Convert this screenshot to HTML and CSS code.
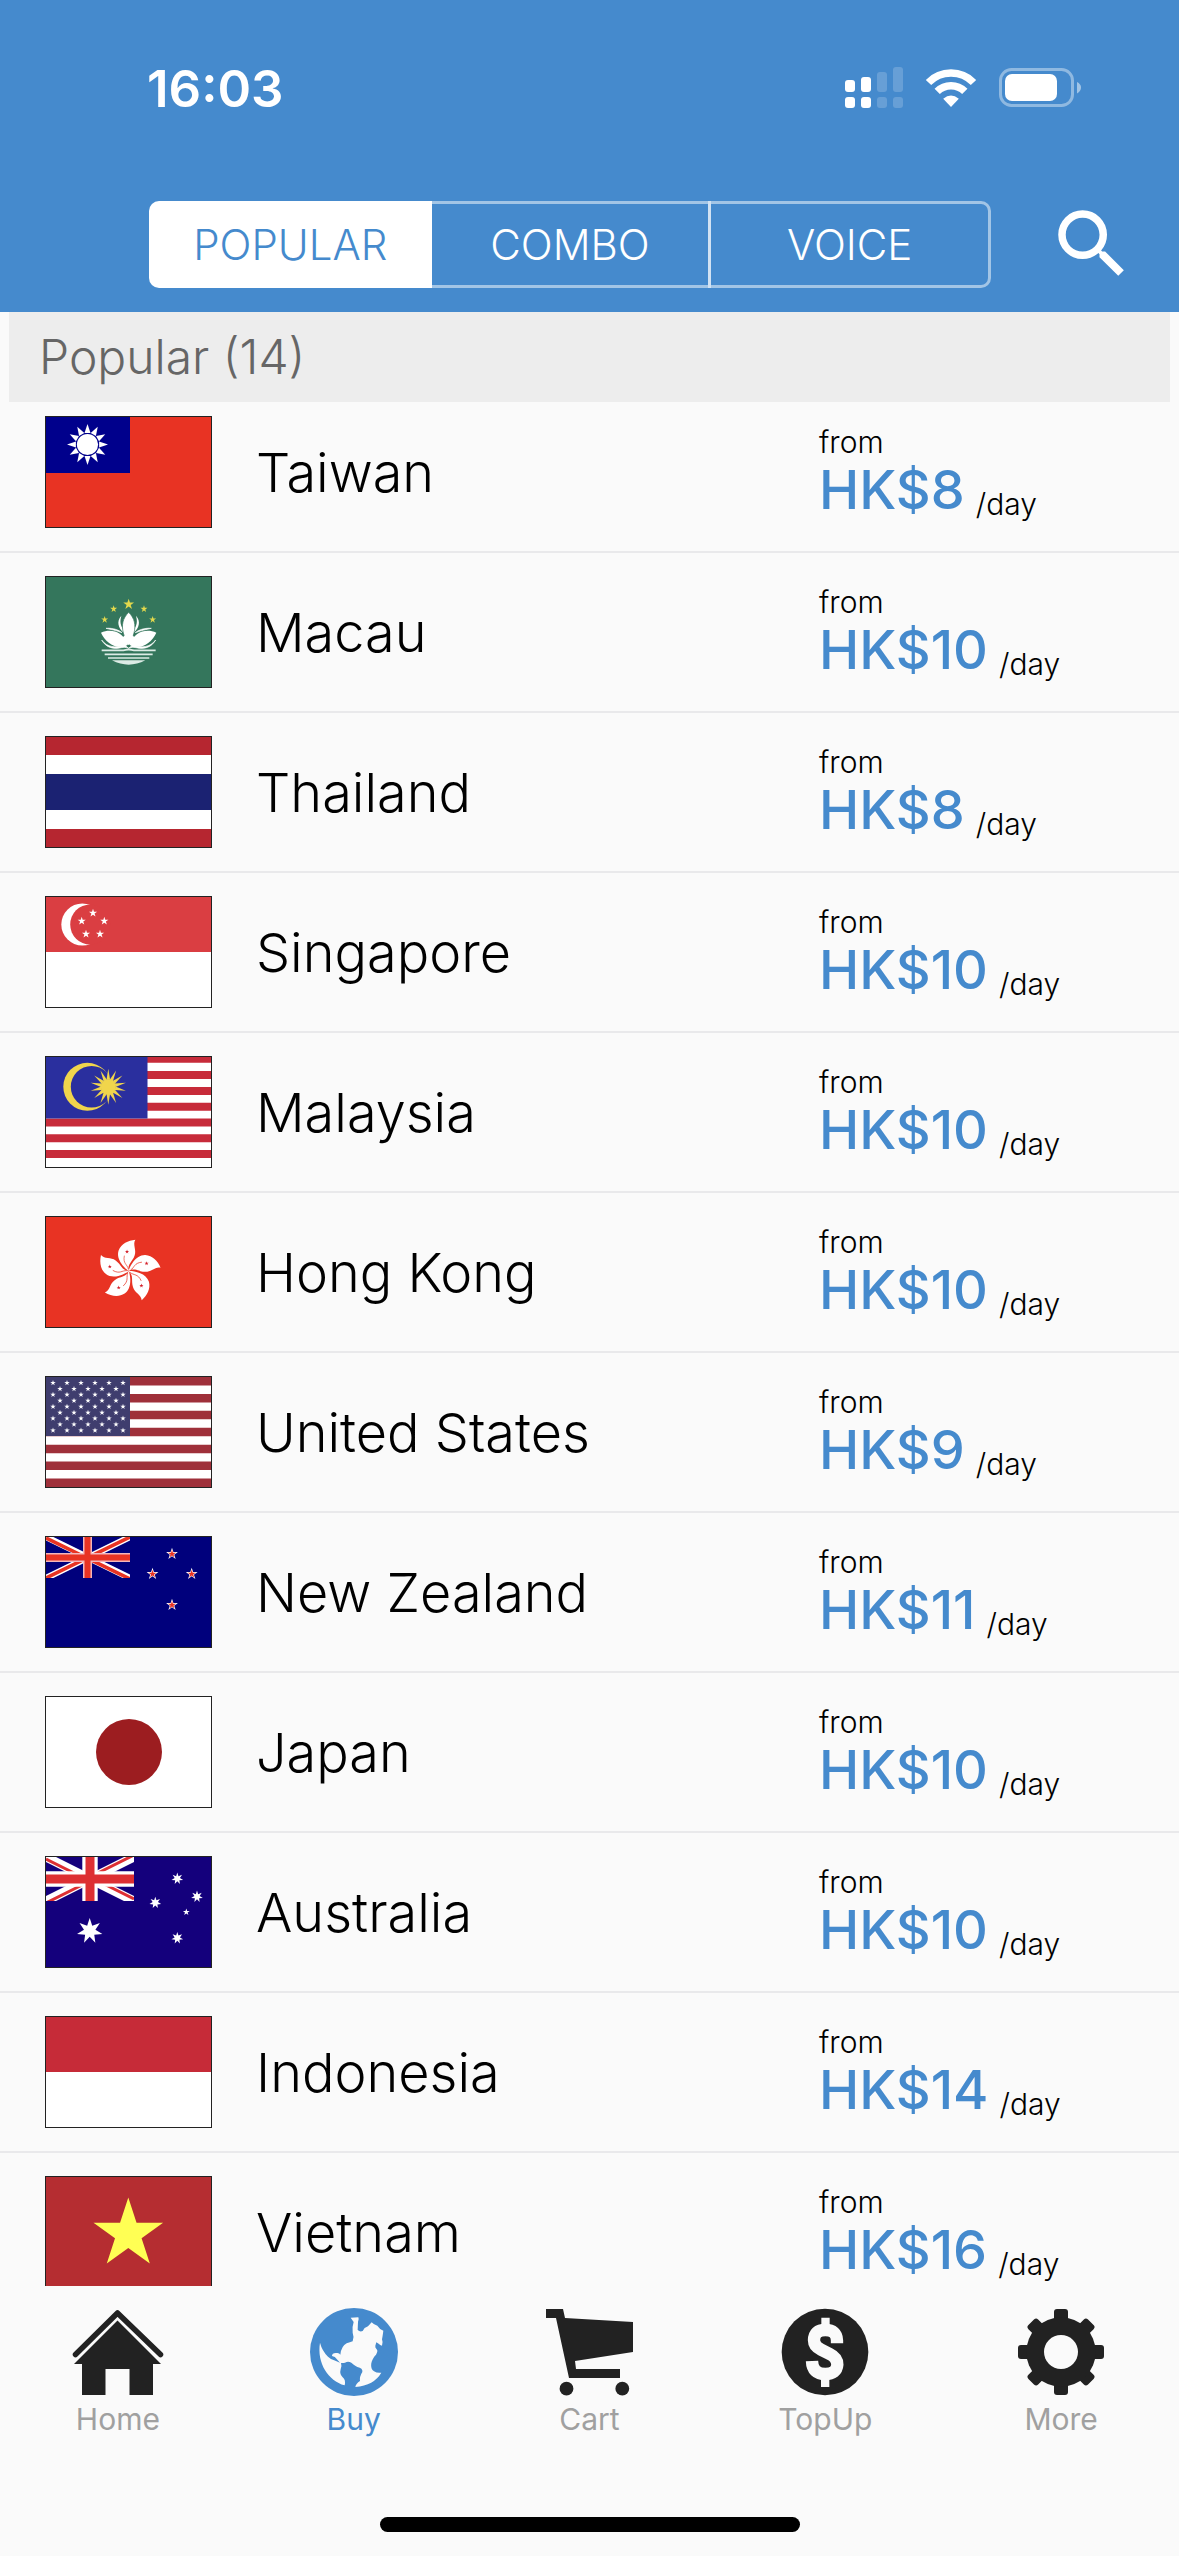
FILE: index.html
```html
<!DOCTYPE html>
<html lang="en">
<head>
<meta charset="utf-8">
<meta name="viewport" content="width=device-width">
<title>Popular plans</title>
<link rel="stylesheet" href="styles.css">
</head>
<body>
<svg class="defs" aria-hidden="true">
  <defs>
    <path id="star5" d="M0-10L2.25-3.09L9.51-3.09L3.63 1.18L5.88 8.09L0 3.82L-5.88 8.09L-3.63 1.18L-9.51-3.09L-2.25-3.09Z"/>
    <path id="star7" d="M0-10L1.95-4.05L7.82-6.23L4.39-1L9.75 2.23L3.52 2.81L4.34 9.01L0 4.5L-4.34 9.01L-3.52 2.81L-9.75 2.23L-4.39-1L-7.82-6.23L-1.95-4.05Z"/>
    <path id="ray12" d="M0-20.5L3-11.6H-3Z"/>
    <path id="ray14" d="M0-18L1.8-7H-1.8Z"/>
    <g id="us-star"><use href="#star5" transform="scale(.29)"/></g>
    <g id="us-row5">
      <use href="#us-star" x="14"/><use href="#us-star" x="28"/><use href="#us-star" x="42"/><use href="#us-star" x="56"/><use href="#us-star" x="70"/>
    </g>
    <g id="us-row6">
      <use href="#us-star" x="7"/><use href="#us-star" x="21"/><use href="#us-star" x="35"/><use href="#us-star" x="49"/><use href="#us-star" x="63"/><use href="#us-star" x="77"/>
    </g>
    <g id="nz-star"><use href="#star5" transform="scale(.62)" fill="#fff"/><use href="#star5" transform="scale(.42)" fill="#e83323"/></g>
    <g id="petal">
      <path fill="#fff" d="M0 0C-10-6-40-34-30-62C-22-82-2-92 20-94C11-80 24-64 18-47C11-26-4-22 0 0Z"/>
      <path fill="none" stroke="#e83323" stroke-width="2" d="M-1-6C-4-20-18-22-13-46"/>
      <use href="#star5" transform="translate(-5 -58) scale(.65)" fill="#d3202a"/>
    </g>
    <g id="lotus-side" fill="#fff">
      <path d="M51 131C82 118 116 128 132 167C104 184 66 166 51 131Z"/>
      <path d="M112 80C96 98 104 116 117 130L120 124C109 110 107 98 112 80Z"/>
      <path d="M66 118C88 116 106 124 114 131L110 130C96 124 82 122 66 118Z" stroke="#fff" stroke-width="2"/>
      <path d="M53 153C70 176 96 176 116 170Q126 168 134 178Q122 173 112 176C88 182 66 176 53 153Z" stroke="#fff" stroke-width="2"/>
    </g>
  </defs>
</svg>

<header class="header">
  <div class="status">
    <time class="clock">16:03</time>
    <div class="indicators">
      <svg width="58" height="42" viewBox="0 0 58 42" fill="#fff" role="img" aria-label="Signal">
        <rect x="0" y="13" width="10" height="12" rx="3"/><rect x="16" y="10" width="10" height="15" rx="3"/>
        <rect x="0" y="30" width="10" height="11" rx="3"/><rect x="16" y="30" width="10" height="11" rx="3"/>
        <g opacity=".18"><rect x="32" y="5" width="10" height="20" rx="3"/><rect x="48" y="0" width="10" height="25" rx="3"/>
        <rect x="32" y="30" width="10" height="11" rx="3"/><rect x="48" y="30" width="10" height="11" rx="3"/></g>
      </svg>
      <svg width="52" height="38" viewBox="0 0 52 38" role="img" aria-label="Wi-Fi">
        <g fill="none" stroke="#fff" stroke-width="7.5">
          <path d="M3.5 13.5A31.5 31.5 0 0 1 48.5 13.5"/><path d="M12.2 22.4A19.5 19.5 0 0 1 39.8 22.4"/>
        </g>
        <path fill="#fff" d="M26 38L18.2 29.8Q26 23 33.8 29.8Z"/>
      </svg>
      <svg width="82" height="40" viewBox="0 0 82 40" role="img" aria-label="Battery">
        <rect x="1.5" y="1.5" width="72" height="36" rx="11" fill="none" stroke="#fff" stroke-opacity=".4" stroke-width="3"/>
        <rect x="6" y="6" width="52" height="27" rx="7" fill="#fff"/>
        <path d="M78 14Q82 16 82 19.5T78 25.500Z" fill="#fff" opacity=".5"/>
      </svg>
    </div>
  </div>
  <div class="toolbar">
    <div class="segments" role="tablist">
      <button class="segment selected" role="tab" aria-selected="true">POPULAR</button>
      <button class="segment" role="tab" aria-selected="false">COMBO</button>
      <button class="segment" role="tab" aria-selected="false">VOICE</button>
    </div>
    <button class="search" aria-label="Search">
      <svg width="90" height="90" viewBox="0 0 24 24" fill="#fff"><path d="M15.5 14h-.79l-.28-.27A6.471 6.471 0 0 0 16 9.500 6.500 6.500 0 1 0 9.500 16c1.610 0 3.090-.59 4.230-1.570l.27.28v.79l5 4.990L20.490 19l-4.990-5zm-6 0C7.010 14 5 11.990 5 9.500S7.010 5 9.500 5 14 7.010 14 9.500 11.990 14 9.500 14z"/></svg>
    </button>
  </div>
</header>

<main class="content">
  <h1 class="section">Popular (14)</h1>
  <ul class="list">
    <li><a class="row" href="#taiwan">
      <svg class="flag" viewBox="0 0 165 110"><path fill="#e83323" d="M0 0h165v110H0z"/><path fill="#00008c" d="M0 0h84v56H0z"/>
        <g transform="translate(41.5 27.5)" fill="#fff"><use href="#ray12"/><use href="#ray12" transform="rotate(30)"/><use href="#ray12" transform="rotate(60)"/><use href="#ray12" transform="rotate(90)"/><use href="#ray12" transform="rotate(120)"/><use href="#ray12" transform="rotate(150)"/><use href="#ray12" transform="rotate(180)"/><use href="#ray12" transform="rotate(210)"/><use href="#ray12" transform="rotate(240)"/><use href="#ray12" transform="rotate(270)"/><use href="#ray12" transform="rotate(300)"/><use href="#ray12" transform="rotate(330)"/><circle r="10.600"/></g></svg>
      <span class="name">Taiwan</span>
      <span class="price"><span class="from">from</span><span class="line"><b class="amount">HK$8</b><span class="unit">/day</span></span></span>
    </a></li>
    <li><a class="row" href="#macau">
      <svg class="flag" viewBox="0 0 165 110"><path fill="#34765c" d="M0 0h165v110H0z"/>
        <g transform="translate(38 12) scale(.3333)">
          <g fill="#e4d94c"><use href="#star5" transform="translate(134 46) scale(1.7)"/><use href="#star5" transform="translate(89 60) scale(1.1)"/><use href="#star5" transform="translate(180 60) scale(1.1)"/><use href="#star5" transform="translate(62 92) scale(1.1)"/><use href="#star5" transform="translate(206 92) scale(1.1)"/></g>
          <use href="#lotus-side"/><use href="#lotus-side" transform="translate(268 0) scale(-1 1)"/>
          <path fill="#fff" stroke="#34765c" stroke-width="2" d="M134 70C116 88 112 108 118 132Q124 155 134 168Q144 155 150 132C156 108 152 88 134 70Z"/>
          <path fill="#fff" d="M110 150L134 168L158 150L134 130Z"/>
          <g fill="none" stroke="#dcebe5" stroke-width="5"><path d="M53 184H118Q134 180 150 184H215M62 196H206M72 207H196"/></g>
          <path fill="#dcebe5" d="M84 214H184Q134 240 84 214Z"/>
        </g></svg>
      <span class="name">Macau</span>
      <span class="price"><span class="from">from</span><span class="line"><b class="amount">HK$10</b><span class="unit">/day</span></span></span>
    </a></li>
    <li><a class="row" href="#thailand">
      <svg class="flag" viewBox="0 0 165 110"><path fill="#b62630" d="M0 0h165v110H0z"/><path fill="#fff" d="M0 18h165v74H0z"/><path fill="#1b2272" d="M0 37h165v36H0z"/></svg>
      <span class="name">Thailand</span>
      <span class="price"><span class="from">from</span><span class="line"><b class="amount">HK$8</b><span class="unit">/day</span></span></span>
    </a></li>
    <li><a class="row" href="#singapore">
      <svg class="flag" viewBox="0 0 165 110"><path fill="#fff" d="M0 0h165v110H0z"/><path fill="#da3e42" d="M0 0h165v55H0z"/><circle cx="36.300" cy="27.500" r="21" fill="#fff"/><circle cx="44.200" cy="27.500" r="20" fill="#da3e42"/>
        <g fill="#fff"><use href="#star5" transform="translate(47 16) scale(.43)"/><use href="#star5" transform="translate(35.700 24) scale(.43)"/><use href="#star5" transform="translate(58.300 24) scale(.43)"/><use href="#star5" transform="translate(40 37) scale(.43)"/><use href="#star5" transform="translate(54 37) scale(.43)"/></g></svg>
      <span class="name">Singapore</span>
      <span class="price"><span class="from">from</span><span class="line"><b class="amount">HK$10</b><span class="unit">/day</span></span></span>
    </a></li>
    <li><a class="row" href="#malaysia">
      <svg class="flag" viewBox="0 0 165 110"><path fill="#fff" d="M0 0h165v110H0z"/><path fill="#c72b3a" d="M0 0h165v5.700H0zM0 14h165v8H0zM0 30h165v8H0zM0 45.700h165v8H0zM0 61.500h165v8H0zM0 77.300h165v8H0zM0 93h165v8H0z"/><path fill="#2a2f9e" d="M0 0h101.500v61.500H0z"/>
        <circle cx="41.300" cy="29.800" r="24" fill="#f0d54c"/><circle cx="45.600" cy="29.800" r="20.800" fill="#2a2f9e"/>
        <g transform="translate(62.300 29.800)" fill="#f0d54c"><circle r="7.600"/><use href="#ray14"/><use href="#ray14" transform="rotate(25.700)"/><use href="#ray14" transform="rotate(51.400)"/><use href="#ray14" transform="rotate(77.100)"/><use href="#ray14" transform="rotate(102.900)"/><use href="#ray14" transform="rotate(128.600)"/><use href="#ray14" transform="rotate(154.300)"/><use href="#ray14" transform="rotate(180)"/><use href="#ray14" transform="rotate(205.700)"/><use href="#ray14" transform="rotate(231.400)"/><use href="#ray14" transform="rotate(257.100)"/><use href="#ray14" transform="rotate(282.900)"/><use href="#ray14" transform="rotate(308.600)"/><use href="#ray14" transform="rotate(334.300)"/></g></svg>
      <span class="name">Malaysia</span>
      <span class="price"><span class="from">from</span><span class="line"><b class="amount">HK$10</b><span class="unit">/day</span></span></span>
    </a></li>
    <li><a class="row" href="#hong-kong">
      <svg class="flag" viewBox="0 0 165 110"><path fill="#e83323" d="M0 0h165v110H0z"/>
        <g transform="translate(82.700 54) scale(.3333)"><use href="#petal"/><use href="#petal" transform="rotate(72)"/><use href="#petal" transform="rotate(144)"/><use href="#petal" transform="rotate(216)"/><use href="#petal" transform="rotate(288)"/></g></svg>
      <span class="name">Hong Kong</span>
      <span class="price"><span class="from">from</span><span class="line"><b class="amount">HK$10</b><span class="unit">/day</span></span></span>
    </a></li>
    <li><a class="row" href="#united-states">
      <svg class="flag" viewBox="0 0 165 110"><path fill="#fff" d="M0 0h165v110H0z"/><path stroke="#9f303a" stroke-width="8.460" d="M0 4.230h165M0 21.150h165M0 38.080h165M0 55h165M0 71.920h165M0 88.850h165M0 105.770h165"/><path fill="#3f3d6e" d="M0 0h84v59H0z"/>
        <g fill="#fff"><use href="#us-row6" y="5.800"/><use href="#us-row5" y="11.800"/><use href="#us-row6" y="17.700"/><use href="#us-row5" y="23.700"/><use href="#us-row6" y="29.600"/><use href="#us-row5" y="35.600"/><use href="#us-row6" y="41.500"/><use href="#us-row5" y="47.400"/><use href="#us-row6" y="53.400"/></g></svg>
      <span class="name">United States</span>
      <span class="price"><span class="from">from</span><span class="line"><b class="amount">HK$9</b><span class="unit">/day</span></span></span>
    </a></li>
    <li><a class="row" href="#new-zealand">
      <svg class="flag" viewBox="0 0 165 110"><path fill="#00007c" d="M0 0h165v110H0z"/>
        <svg width="84" height="41" viewBox="0 0 84 41">
          <path stroke="#fff" stroke-width="6.500" d="M0 0L84 41M84 0L0 41"/><path stroke="#e83323" stroke-width="3.600" d="M0 1L84 42M84 0L0 41"/>
          <path stroke="#f3b6ba" stroke-width="9" d="M41.500 0V41M0 20.500H84"/><path stroke="#e83323" stroke-width="6" d="M41.500 0V41M0 20.500H84"/>
        </svg>
        <use href="#nz-star" x="126" y="17"/><use href="#nz-star" x="106.500" y="37"/><use href="#nz-star" x="145.700" y="37"/><use href="#nz-star" x="126" y="68"/></svg>
      <span class="name">New Zealand</span>
      <span class="price"><span class="from">from</span><span class="line"><b class="amount">HK$11</b><span class="unit">/day</span></span></span>
    </a></li>
    <li><a class="row" href="#japan">
      <svg class="flag" viewBox="0 0 165 110"><path fill="#fff" d="M0 0h165v110H0z"/><circle cx="83" cy="55" r="33" fill="#9c1d20"/></svg>
      <span class="name">Japan</span>
      <span class="price"><span class="from">from</span><span class="line"><b class="amount">HK$10</b><span class="unit">/day</span></span></span>
    </a></li>
    <li><a class="row" href="#australia">
      <svg class="flag" viewBox="0 0 165 110"><path fill="#14007c" d="M0 0h165v110H0z"/>
        <svg width="88" height="44" viewBox="0 0 88 44">
          <path stroke="#fff" stroke-width="9" d="M0 0L88 44M88 0L0 44"/>
          <path stroke="#dd2f33" stroke-width="3" d="M0 2L44 24M88 -2L44 20M44 20L88 42M44 24L0 46"/>
          <path stroke="#fff" stroke-width="15.400" d="M44 0V44M0 22H88"/><path stroke="#dd2f33" stroke-width="9" d="M44 0V44M0 22H88"/>
        </svg>
        <g fill="#fff"><use href="#star7" transform="translate(43.700 74) scale(1.300)"/><use href="#star7" transform="translate(131.300 21.600) scale(.6)"/><use href="#star7" transform="translate(151 39.600) scale(.6)"/><use href="#star7" transform="translate(109.300 45.700) scale(.6)"/><use href="#star5" transform="translate(140.300 55) scale(.36)"/><use href="#star7" transform="translate(131.300 81) scale(.6)"/></g></svg>
      <span class="name">Australia</span>
      <span class="price"><span class="from">from</span><span class="line"><b class="amount">HK$10</b><span class="unit">/day</span></span></span>
    </a></li>
    <li><a class="row" href="#indonesia">
      <svg class="flag" viewBox="0 0 165 110"><path fill="#fff" d="M0 0h165v110H0z"/><path fill="#c62b38" d="M0 0h165v55H0z"/></svg>
      <span class="name">Indonesia</span>
      <span class="price"><span class="from">from</span><span class="line"><b class="amount">HK$14</b><span class="unit">/day</span></span></span>
    </a></li>
    <li><a class="row" href="#vietnam">
      <svg class="flag" viewBox="0 0 165 110"><path fill="#b52d31" d="M0 0h165v110H0z"/><use href="#star5" transform="translate(82.300 57) scale(3.660)" fill="#ffff54"/></svg>
      <span class="name">Vietnam</span>
      <span class="price"><span class="from">from</span><span class="line"><b class="amount">HK$16</b><span class="unit">/day</span></span></span>
    </a></li>
  </ul>
</main>

<footer class="footer">
  <nav class="tabs">
    <a class="tab" href="#home">
      <svg width="92" height="88" viewBox="0 0 92 88"><path fill="none" stroke="#222" stroke-width="5.500" stroke-linecap="round" stroke-linejoin="round" d="M3.500 46.500L45.500 5L88.500 46.500"/><path fill="#222" d="M45.500 12.500L89 56H81V87H57.500V61H33.500V87H10V56H2Z"/></svg>
      <span>Home</span>
    </a>
    <a class="tab active" href="#buy" aria-current="page">
      <svg width="88" height="88" viewBox="30 24 264 264"><circle cx="162" cy="156" r="132" fill="#458acd"/>
        <path fill="#fafafa" d="M152 53L175 52Q178 58 174 66L173 90Q180 97 188 93Q192 83 204 79L215 67Q222 75 232 77Q240 89 250 92Q248 108 246 118Q250 128 246 137Q240 136 236 131L229 127L226 137Q224 142 231 149Q234 153 228 164C212 180 208 204 222 214Q232 220 244 218Q222 256 166 261Q168 250 180 243Q178 230 187 216Q189 204 172 201Q160 194 154 188Q144 183 135 188Q128 190 123 189Q126 196 122 208Q118 222 128 232Q138 240 134 256C85 242 50 190 60 128Q66 152 84 170Q94 180 106 182L120 188L110 177Q106 170 96 168Q96 158 110 159Q118 158 121 164Q124 138 140 130Q150 127 158 124Q163 110 158 98Q156 80 161 66Z"/></svg>
      <span>Buy</span>
    </a>
    <a class="tab" href="#cart">
      <svg width="88" height="88" viewBox="-1 0 88 88" fill="#222"><path d="M0 1H17L19 10L87 14V44L29 53L30 61H74V70H23L10 10H0Z"/><circle cx="20.500" cy="80.700" r="6.900"/><circle cx="76.300" cy="80.700" r="6.900"/></svg>
      <span>Cart</span>
    </a>
    <a class="tab" href="#topup">
      <svg width="88" height="88" viewBox="-54 25 264 264"><circle cx="78" cy="157" r="130" fill="#222"/><path fill="none" stroke="#fafafa" stroke-width="37" d="M114 131V122Q113 91 79 91Q45 91 45 122Q45 140 66 150L92 163Q115 174 115 195Q113 223 79 223Q40 223 39 184"/><path fill="#fafafa" d="M67 54H92V82H67zM66 234H91V262H66z"/></svg>
      <span>TopUp</span>
    </a>
    <a class="tab" href="#more">
      <svg width="88" height="88" viewBox="-132 -132 264 264" fill="#222"><g id="teeth"><rect x="-21" y="-129" width="42" height="258" rx="9"/><rect x="-129" y="-21" width="258" height="42" rx="9"/></g><use href="#teeth" transform="rotate(45) scale(.98)"/><circle r="104"/><circle r="51" fill="#fafafa"/></svg>
      <span>More</span>
    </a>
  </nav>
  <div class="home-bar"></div>
</footer>
</body>
</html>
```
FILE: styles.css
```css
:root {
  --blue: #458acd;
  --page: #fafafa;
}

* {
  box-sizing: border-box;
}

body {
  margin: 0;
  height: 100vh;
  display: flex;
  flex-direction: column;
  background: var(--page);
  color: #000;
  font-family: Inter, "Liberation Sans", sans-serif;
}

button {
  margin: 0;
  padding: 0;
  border: 0;
  background: none;
  font: inherit;
  color: inherit;
}

a {
  color: inherit;
  text-decoration: none;
}

svg {
  display: block;
  flex: none;
}

.defs {
  position: absolute;
  width: 0;
  height: 0;
}

/* Header */

.header {
  flex: none;
  background: var(--blue);
  color: #fff;
}

.status {
  display: flex;
  align-items: center;
  justify-content: space-between;
  height: 176px;
  padding: 0 98px 0 147px;
}

.clock {
  font-size: 51px;
  font-weight: 600;
}

.indicators {
  display: flex;
  align-items: center;
  gap: 22px;
}

.toolbar {
  display: flex;
  align-items: center;
  gap: 56px;
  height: 136px;
  padding: 0 42px 0 149px;
}

.segments {
  display: flex;
  flex: 1;
}

.segment {
  flex: 1;
  height: 87px;
  border: 3px solid rgba(255, 255, 255, 0.5);
  font-size: 42px;
  font-weight: 300;
}

.segment + .segment {
  margin-left: -3px;
}

.segment:first-child {
  border-radius: 10px 0 0 10px;
}

.segment:last-child {
  border-radius: 0 10px 10px 0;
}

.segment.selected {
  background: #fff;
  color: var(--blue);
}

/* Country list */

.content {
  flex: 1;
  min-height: 0;
  overflow-y: auto;
  scrollbar-width: none;
}

.section {
  position: sticky;
  top: 0;
  z-index: 1;
  margin: 0 9px;
  padding-left: 30px;
  background: #ededed;
  color: #666;
  font-size: 48px;
  font-weight: 300;
  line-height: 90px;
}

.list {
  margin: -9px 0 0;
  padding: 0;
  list-style: none;
}

.row {
  display: grid;
  grid-template-columns: 167px 1fr 360px;
  align-items: center;
  column-gap: 44px;
  height: 160px;
  padding-left: 45px;
  border-bottom: 2px solid #e9e9eb;
}

.flag {
  width: 167px;
  height: 112px;
  border: 1px solid #222;
}

.name {
  font-size: 54px;
  font-weight: 300;
}

.price {
  display: flex;
  flex-direction: column;
}

.from,
.unit {
  font-size: 30px;
  font-weight: 300;
  line-height: 36px;
}

.line {
  height: 60px;
  line-height: 60px;
}

.amount {
  color: var(--blue);
  font-size: 54px;
  font-weight: 500;
}

.unit {
  margin-left: 11px;
  vertical-align: -6px;
}

/* Tab bar */

.footer {
  flex: none;
  padding: 22px 0 24px;
}

.tabs {
  display: flex;
}

.tab {
  display: flex;
  flex: 1;
  flex-direction: column;
  align-items: center;
  gap: 5px;
  color: #a0a0a0;
  font-size: 30px;
  line-height: 36px;
}

.tab.active {
  color: var(--blue);
}

.home-bar {
  width: 420px;
  height: 15px;
  margin: 80px auto 0;
  border-radius: 8px;
  background: #000;
}
```
